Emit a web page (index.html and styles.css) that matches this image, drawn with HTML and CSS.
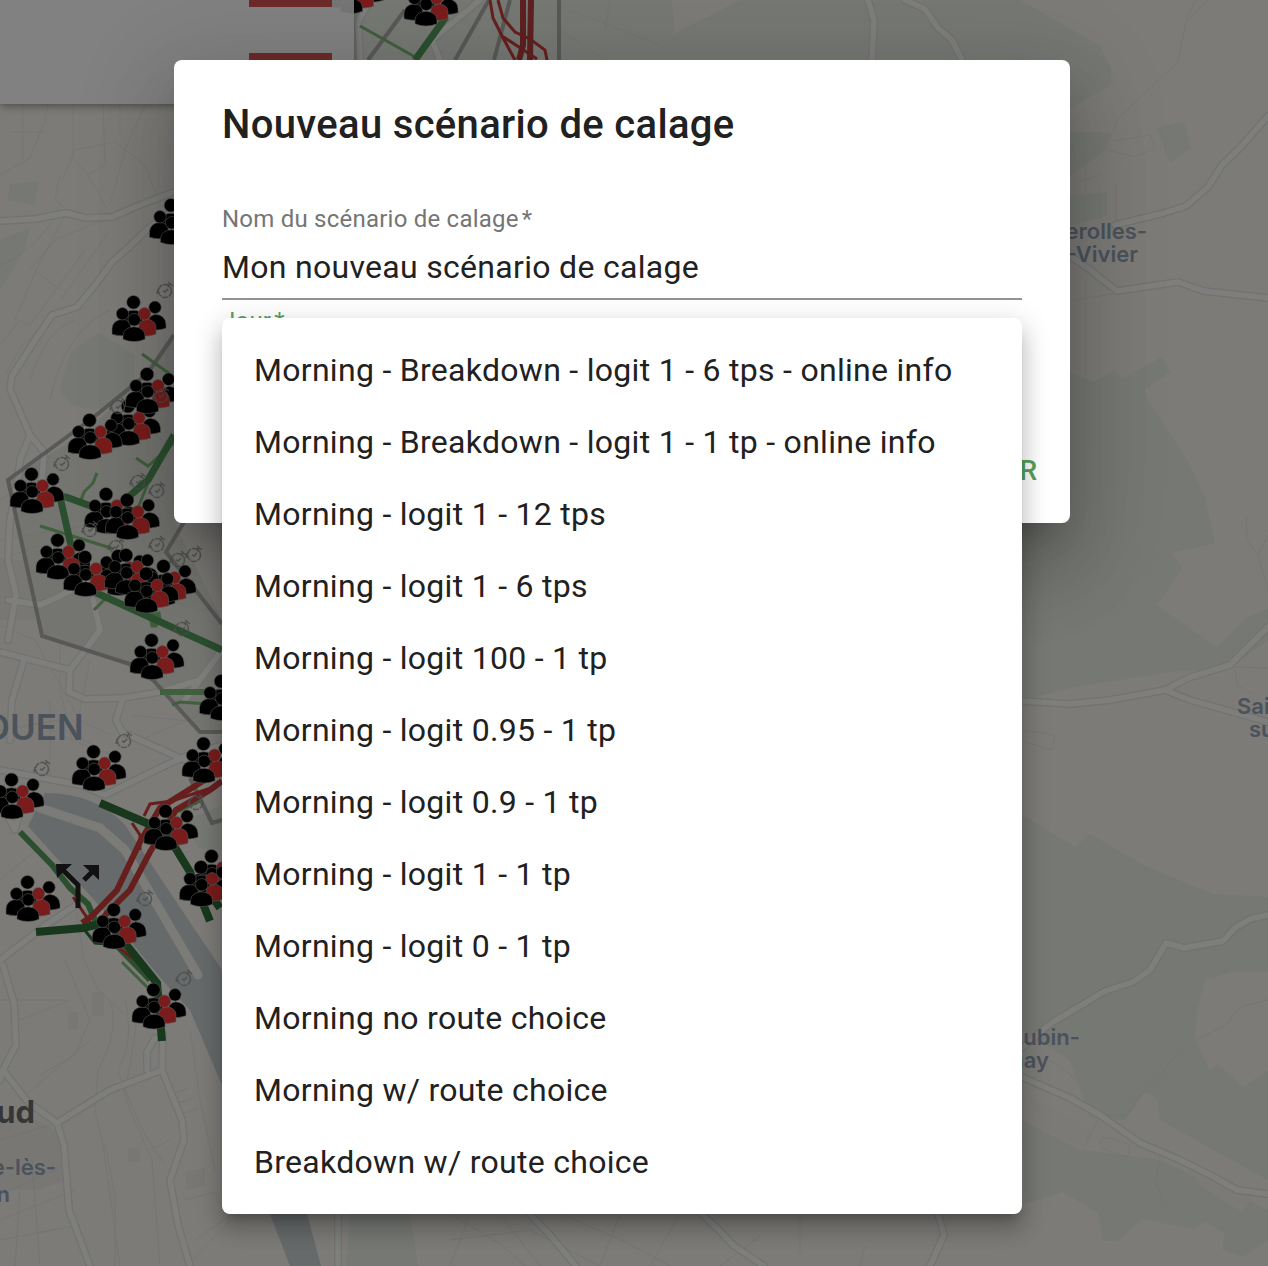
FILE: index.html
```html
<!DOCTYPE html>
<html lang="fr">
<head>
<meta charset="utf-8">
<title>Nouveau scénario de calage</title>
<link rel="stylesheet" href="styles.css">
</head>
<body>
<svg class="map" viewBox="0 0 1268 1266" width="1268" height="1266" aria-hidden="true">
  <defs>
    <g id="people" transform="translate(0 .3)">
      <g stroke="#5b5b59" stroke-width=".6">
        <path d="M-9 22v-6q0-8 9-8t9 8v6z"/>
        <circle r="6.800"/>
        <path d="M-21.500 32v-6q1-8 10-9q8 0 9 8v7q-10 3-19 0z"/>
        <circle cx="-11" cy="11.500" r="6.200"/>
        <path d="M14 24q0-11 8-12q10 1 10.500 10v4q-8 3-17 1z"/>
        <circle cx="21.500" cy="5" r="6.200"/>
        <path fill="#7a1c1b" d="M5 33v-8q1-8 9-8q8 1 8.500 8v7q-8 3-17 1z"/>
        <circle fill="#7a1c1b" cx="11" cy="11.500" r="6.200"/>
        <path d="M-10.500 37v-4q1-8 11-8.500q10 .5 11 8.500v4q-11 4.500-22 0z"/>
        <circle cx=".7" cy="17.500" r="6.200"/>
      </g>
    </g>
    <g id="clock" fill="none" stroke="#4b4b4b" stroke-opacity=".8" stroke-width="1.500">
      <circle r="6.500" stroke-dasharray="6 1"/>
      <path d="M-2 0l2 1 3-3M3-9l5 4M5-7l-2 3M-7-2l-1 5"/>
    </g>
    <g id="roads" fill="none" stroke-linejoin="round" stroke-linecap="round">
      <path d="M0 221L35 219 66 213 86 218 112 217 140 205 174 192M174 210L150 227 128 248 112 262 96 284 77 307 52 315 35 340 12 376 10 389 30 435 44 452 42 480M30 435L20 460 18 480 10 520 8 560 16 595 8 640M8 600L40 605 58 597 90 580M0 652L70 670 100 630 93 600M24 660L12 700 10 740M70 670L69 692 85 699 123 698 160 692 200 680M123 698L116 720 122 732 185 760M185 700L222 650"/>
      <path d="M0 770L80 785 105 795 160 768 184 757 222 745M0 960L46 925 76 905M0 800L15 830 26 790M3 965L14 1003 16 1045 3 1070 28 1102 57 1123 64 1145 69 1210 90 1266M3 1070L0 1080M57 1123L110 1090 162 1070 182 1120 184 1140 170 1180 178 1225 190 1266M162 1070L163 1035M147 1070L147 1052 155 1038"/>
      <path d="M1268 116L1240 148 1222 165 1208 187 1186 206 1164 213 1115 225M1072 257L1090 270 1117 291 1178 282 1204 291 1268 298M1022 701L1070 704 1110 700 1165 690 1188 678 1230 665 1268 627M1165 690L1190 700 1268 722M1022 1048L1050 1024 1105 991 1133 982 1150 970 1166 943 1184 948 1223 941 1235 928 1250 919 1268 915M1022 1077L1070 1098 1100 1115 1140 1143 1180 1160 1210 1175 1237 1190 1268 1194"/>
      <path d="M868 0L874 20 872 60M905 0L925 9 938 28 952 40 962 60M338 1214V1266M530 1214L550 1235 576 1266M702 1214L720 1231 733 1245 764 1266M938 1214L944 1235 930 1266M370 0L358 22 360 60M440 60L432 40 480 0"/>
    </g>
  </defs>
  <rect width="1268" height="1266" fill="#7c7b78"/>
  <g fill="#757873">
    <path d="M354 0H672L674 30 658 60H354zM740 0H1020L1100 46 1111 68V85L1070 109V60H655L672 35z"/>
    <path d="M1070 132L1110 133 1106 150 1070 176zM1157 128L1184 121 1191 148 1170 163zM1070 196L1107 192V216L1070 225z"/>
    <path d="M1070 372L1094 382 1114 371 1123 378 1162 357 1170 372 1145 390 1148 400 1190 465 1205 498 1215 543 1171 553 1182 568 1157 605 1217 648 1245 618 1268 609V640L1228 669 1175 671 1070 688 1022 700V523H1070z"/>
    <path d="M1022 815L1075 847 1090 834 1145 866 1213 894 1268 897V972H1230L1205 980 1197 1010 1195 1041 1210 1070 1218 1064 1243 1087 1268 1070V1180L1160 1120 1157 1098 1145 1092 1125 1120 1090 1118 1070 1060 1022 1030zM1022 1120L1080 1150 1160 1160 1268 1210V1240L1243 1257 1222 1249 1225 1234 1206 1222 1192 1229 1142 1219 1118 1241H1103L1098 1213 1063 1192 1025 1204z"/>
    <path d="M70 353L98 333 135 355 133 390 95 410 72 405 60 390zM0 240L30 228 25 248 0 290zM10 184L38 182 35 205 8 200zM350 1214H410L418 1266H346zM188 820L222 805V850L198 848z"/>
    <path d="M1030 1100l20 8 40 22-5 20-40-20zM1182 1160l50 20 20 20-10 12-40-25z" fill="#7b7a77"/>
  </g>
  <g fill="#747471">
    <path d="M0 560h35v60H0zM0 1120h35l30 15 5 45-35 10H0zM68 1012h10v18H68zM128 1148h12v14h-12zM185 1172l20-4v18l-19 4zM92 992h12v24H92z" opacity=".55"/>
    <path d="M8 480L90 430 174 340V522L222 620V732H200L145 672 42 636z"/>
  </g>
  <path d="M45 793Q95 793 125 825L165 885 222 970V1085L190 1010Q165 985 130 940L28 826z" fill="#666a6b"/>
  <path d="M270 1214H307L321 1266H290z" fill="#666a6b"/>
  <path d="M40 808L100 828 125 850 198 975" fill="none" stroke="#7b7b78" stroke-width="9" stroke-linecap="round" stroke-linejoin="round"/>
  <g fill="none" stroke="#70706f" stroke-width="1" opacity=".5">
    <path d="M0 175L30 158 45 120 48 104M73 104V158L88 175 105 165 103 104M60 175L55 200 75 215M88 175L108 210M62 180L75 150 115 142 145 165 160 205M110 205L125 150 145 104M30 270L55 240 115 215M15 320L36 270 65 215M35 270L60 290M0 345L20 320 30 325 85 250M60 300L75 280 110 230M5 375L22 345 50 325M30 380Q45 330 75 320M50 400Q65 330 110 310M130 380Q140 430 170 445M0 265Q40 250 60 205M10 132H45M23 104V160M120 104V135"/>
    <path d="M0 500L40 475M0 540L90 525M0 560L40 545M60 640V690L72 740M35 640L80 720 110 735M0 625L35 640M28 720L95 750M50 700V780M90 660L75 735 120 760M0 730L60 720M132 715L222 725M140 740L212 710M0 880L72 820M20 910L78 870M65 960L90 1020 75 1055 40 1075M0 1000H65M20 1020L70 1000M20 1100L90 1040M0 1140L60 1122M0 1195L65 1165M0 1220L75 1190M15 1266L20 1190M40 1266L32 1160M0 1240L80 1225"/>
    <path d="M75 905L84 960 98 990 125 1015M110 1000Q120 1030 98 1070L95 1110 103 1145 120 1266M125 1000Q135 1040 118 1070L130 1110 152 1160 160 1266M140 995Q132 1060 125 1090L145 1135 165 1165M105 1145L115 1195V1266M190 1030L200 1100 215 1170M170 1095l20-7M173 1105l20-7M178 1115l20-7M150 1150l20-10M185 1200l30-8 15 30-40 40M195 1240l50-35"/>
    <path d="M1207 0L1186 22 1178 62 1118 118 1110 138 1115 141 1150 135 1155 148 1135 157 1108 150M1080 182L1100 175M1116 220V185M1075 300L1112 294M1195 0L1186 20M1246 515L1247 540 1258 555 1268 590M1258 555L1268 535M1235 670L1237 685 1255 695M1235 667L1268 668M1022 730L1055 735 1052 750 1022 741M1195 1041L1225 1025 1242 1006 1268 1000M1180 1050L1160 1075 1140 1095 1127 1115H1100L1085 1145M1160 1155L1156 1180 1163 1204M1100 1140l8-3 22 8-2 12-25-8zM1050 1060l25 18"/>
    <path d="M570 10l90 35M560 30l60 40M610 0l-5 30M470 1214l-20 52M450 1240l80-10 70 36M500 1214l40 52M560 1214l60 25 50 27M620 1214l-20 52M650 1266l30-52M720 1266l40-30M800 1214v40M860 1266l5-20M450 1214l50 30 25 22"/>
  </g>
  <use href="#roads" stroke="#727271" stroke-width="8"/>
  <use href="#roads" stroke="#7e7e7c" stroke-width="5.500"/>
  <g class="town">
    <text x="83.500" y="740" text-anchor="end" class="city">ROUEN</text>
    <text x="56" y="1175" text-anchor="end">e-lès-</text>
    <text x="10" y="1202" text-anchor="end">n</text>
    <text x="1147" y="239" text-anchor="end">erolles-</text>
    <text x="1138" y="262" text-anchor="end">-Vivier</text>
    <text x="1237" y="714">Sai</text>
    <text x="1249" y="737">su</text>
    <text x="1080" y="1045" text-anchor="end">ubin-</text>
    <text x="1049" y="1068" text-anchor="end">nay</text>
    <text x="35" y="1123" text-anchor="end" class="zone">Sud</text>
  </g>
  <g fill="none" stroke="#555554" stroke-width="4">
    <path d="M174 335L147 374 90 420 8 480 42 636 130 664 153 680 200 732H222M187 517L166 552 222 624M190 778L212 823 222 820M405 10L368 60M489 0L455 60M510 0L494 60M559 0V60" stroke-opacity=".9"/>
  </g>
  <g fill="none" stroke="#405f3d" stroke-width="3">
    <path d="M142 354L174 377M97 473L93 483 84 492 80 503M40 526L114 549M136 458L148 466 174 443M148 483L138 508M94 610L112 592 132 565M360 26L417 58M172 705L180 702 222 705M122 962L150 990M178 812L200 801"/>
    <path d="M160 692H222" stroke-width="6"/>
    <path d="M150 615l9-2 1 6-4 7h-4z" fill="#405f3d"/>
  </g>
  <g fill="none" stroke="#2b4f2e" stroke-width="7">
    <path d="M174 435L148 480 110 513 66 497 60 497 72 550 69 590M90 590L222 650M446 17L415 60"/>
    <path d="M20 832L52 865 70 888 88 904 97 925 150 980" stroke-width="6"/>
  </g>
  <g fill="none" stroke="#671f1e" stroke-width="6">
    <path d="M222 768L203 781 160 808 140 842 117 890 92 916 82 923M222 781L210 790 176 810 150 852 130 890 107 913 100 923"/>
    <path d="M214 787L172 801 150 804 144 816M132 823L140 835V850M73 897L90 922 108 940 138 962M490 0L493 18 502 36 515 60M498 0L503 18 515 32 530 39 545 50 547 60M502 36L525 51 537 59" stroke-width="3"/>
    <path d="M523 0V45L519 60M531 0L530 60" stroke="#5d2120"/>
  </g>
  <g fill="none" stroke="#18381d" stroke-width="8">
    <path d="M100 803L165 831 190 872 210 921M36 932L83 928 108 922 157 983 162 1041M200 880L220 908"/>
    <path d="M83 928L95 943 108 944" stroke-width="3"/>
  </g>
  <g fill="none" stroke="#111" stroke-width="5">
    <path d="M78 908V885L61 868M84 880L96 868"/>
    <path d="M56 864H72L57 878zM83 865H99V880z" fill="#111" stroke="none"/>
  </g>
  <use href="#clock" x="165" y="291"/><use href="#clock" x="62" y="464"/><use href="#clock" x="157" y="491"/>
  <use href="#clock" x="138" y="482"/><use href="#clock" x="157" y="545"/><use href="#clock" x="194" y="555"/>
  <use href="#clock" x="178" y="560"/><use href="#clock" x="182" y="629"/><use href="#clock" x="124" y="741"/>
  <use href="#clock" x="42" y="769"/><use href="#clock" x="145" y="899"/><use href="#clock" x="184" y="979"/>
  <use href="#clock" x="196" y="803"/><use href="#clock" x="116" y="547"/><use href="#people" x="171" y="205"/>
  <use href="#people" x="133.500" y="302"/><use href="#people" x="128" y="406"/><use href="#people" x="147" y="374"/>
  <use href="#people" x="89.500" y="420"/><use href="#people" x="31.500" y="474"/><use href="#people" x="106" y="494"/>
  <use href="#people" x="127" y="500"/><use href="#people" x="57.500" y="540"/><use href="#people" x="118" y="556"/>
  <use href="#people" x="85" y="557"/><use href="#people" x="126" y="555"/><use href="#people" x="163.500" y="566"/>
  <use href="#people" x="146" y="573.500"/><use href="#people" x="151.500" y="640"/><use href="#people" x="221" y="681"/>
  <use href="#people" x="93.500" y="751.500"/><use href="#people" x="203.500" y="743.500"/><use href="#people" x="11.500" y="779.500"/>
  <use href="#people" x="165.500" y="811"/><use href="#people" x="211.500" y="856"/><use href="#people" x="201" y="867"/>
  <use href="#people" x="27.500" y="882"/><use href="#people" x="113.700" y="909.500"/><use href="#people" x="153.500" y="989.500"/>
  <use href="#people" x="425.500" y="-13.500"/><use href="#people" x="351" y="-26"/>
  <use href="#clock" x="90" y="530"/><use href="#clock" x="118" y="407"/><use href="#clock" x="161" y="396"/>
</svg>

<aside class="side-panel">
  <span class="bar"></span>
  <span class="bar"></span>
</aside>

<main class="dialog" role="dialog" aria-labelledby="dialog-title">
  <h2 class="dialog-title" id="dialog-title">Nouveau scénario de calage</h2>
  <label class="field">
    <span class="field-label">Nom du scénario de calage<span class="required">*</span></span>
    <span class="field-value">Mon nouveau scénario de calage</span>
  </label>
  <div class="day-label">Jour<span class="required">*</span></div>
  <div class="actions"><span class="action">CRÉER</span></div>

  <ul class="menu" role="listbox">
    <li>Morning - Breakdown - logit 1 - 6 tps - online info</li>
    <li>Morning - Breakdown - logit 1 - 1 tp - online info</li>
    <li>Morning - logit 1 - 12 tps</li>
    <li>Morning - logit 1 - 6 tps</li>
    <li>Morning - logit 100 - 1 tp</li>
    <li>Morning - logit 0.95 - 1 tp</li>
    <li>Morning - logit 0.9 - 1 tp</li>
    <li>Morning - logit 1 - 1 tp</li>
    <li>Morning - logit 0 - 1 tp</li>
    <li>Morning no route choice</li>
    <li>Morning w/ route choice</li>
    <li>Breakdown w/ route choice</li>
  </ul>
</main>
</body>
</html>
```
FILE: styles.css
```css
* { box-sizing: border-box; }

body {
  margin: 0;
  width: 1268px;
  height: 1266px;
  overflow: hidden;
  position: relative;
  background: #7c7b78;
  color: #212121;
  font-family: Roboto, "Liberation Sans", sans-serif;
}

.map {
  position: absolute;
  inset: 0;
  display: block;
}

.town {
  fill: #4a525b;
  font: 600 22px Inter, sans-serif;
}

.city {
  font-size: 35px;
  font-weight: 600;
}

.zone {
  fill: #363636;
  font: 700 31px Inter, sans-serif;
}

.side-panel {
  position: absolute;
  top: 0;
  left: 0;
  width: 354px;
  height: 104px;
  padding-left: 249px;
  display: flex;
  flex-direction: column;
  gap: 46px;
  background: rgba(130, 130, 130, .9);
  box-shadow: 0 2px 8px rgba(0, 0, 0, .4);
}

.bar {
  width: 83px;
  height: 38px;
  flex: none;
  background: #6d2a2a;
}

.bar:first-child { height: 7px; }

.dialog {
  position: relative;
  width: 896px;
  height: 463px;
  margin: 60px 0 0 174px;
  padding: 33px 48px 16px;
  display: flex;
  flex-direction: column;
  background: #fff;
  border-radius: 8px;
  box-shadow: 0 22px 30px -14px rgba(0, 0, 0, .2), 0 48px 76px 6px rgba(0, 0, 0, .14), 0 18px 92px 16px rgba(0, 0, 0, .12);
}

.dialog-title {
  margin: 0;
  font-size: 40px;
  font-weight: 500;
  line-height: 64px;
  letter-spacing: .33px;
}

.field {
  display: flex;
  flex-direction: column;
  height: 100px;
  margin-top: 43px;
  border-bottom: 2px solid #949494;
}

.field-label {
  color: #757575;
  font-size: 24px;
  line-height: 38px;
  letter-spacing: .225px;
}

.required { margin-left: 3px; }

.field-value {
  font-size: 32px;
  line-height: 38px;
  letter-spacing: .3px;
  margin-top: 10px;
}

.day-label {
  margin: 2px 0 0;
  color: #57a05b;
  font-size: 24px;
  line-height: 38px;
  letter-spacing: .225px;
}

.actions {
  margin: auto -16px 0 0;
  display: flex;
  justify-content: flex-end;
}

.action {
  color: #57a05b;
  font-size: 28px;
  font-weight: 500;
  line-height: 49px;
  height: 61px;
  letter-spacing: .8px;
}

.menu {
  position: absolute;
  top: 258px;
  left: 48px;
  width: 800px;
  margin: 0;
  padding: 16px 0;
  list-style: none;
  background: #fff;
  border-radius: 8px;
  box-shadow: 0 10px 10px -6px rgba(0, 0, 0, .2), 0 16px 20px 2px rgba(0, 0, 0, .14), 0 6px 28px 4px rgba(0, 0, 0, .12);
}

.menu li {
  height: 72px;
  padding: 12px 32px;
  font-size: 32px;
  line-height: 48px;
  letter-spacing: .29px;
  white-space: nowrap;
}
```
